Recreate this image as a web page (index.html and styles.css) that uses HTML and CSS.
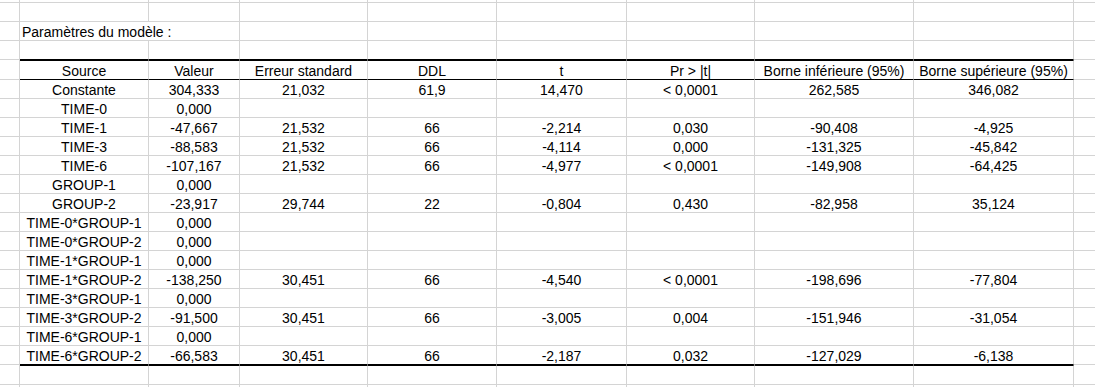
FILE: index.html
```html
<!DOCTYPE html>
<html lang="fr">
<head>
<meta charset="utf-8">
<title>Paramètres du modèle</title>
<link rel="stylesheet" href="styles.css">
</head>
<body>
<div class="sheet">
  <div class="row r-top"><div></div><div></div><div></div><div></div><div></div><div></div><div></div><div></div><div></div><div></div></div>
  <div class="row"><div></div><div></div><div></div><div></div><div></div><div></div><div></div><div></div><div></div><div></div></div>
  <div class="row"><div></div><div class="title">Paramètres du modèle :</div><div></div><div></div><div></div><div></div><div></div><div></div><div></div></div>
  <div class="row above"><div></div><div class="t"></div><div class="t"></div><div class="t"></div><div class="t"></div><div class="t"></div><div class="t"></div><div class="t"></div><div class="t"></div><div></div></div>
  <div class="row head"><div></div><div class="t">Source</div><div class="t">Valeur</div><div class="t">Erreur standard</div><div class="t">DDL</div><div class="t">t</div><div class="t">Pr &gt; |t|</div><div class="t">Borne inférieure (95%)</div><div class="t">Borne supérieure (95%)</div><div></div></div>
  <div class="row"><div></div><div class="t">Constante</div><div class="t">304,333</div><div class="t">21,032</div><div class="t">61,9</div><div class="t">14,470</div><div class="t">&lt; 0,0001</div><div class="t">262,585</div><div class="t">346,082</div><div></div></div>
  <div class="row"><div></div><div class="t">TIME-0</div><div class="t">0,000</div><div class="t"></div><div class="t"></div><div class="t"></div><div class="t"></div><div class="t"></div><div class="t"></div><div></div></div>
  <div class="row"><div></div><div class="t">TIME-1</div><div class="t">-47,667</div><div class="t">21,532</div><div class="t">66</div><div class="t">-2,214</div><div class="t">0,030</div><div class="t">-90,408</div><div class="t">-4,925</div><div></div></div>
  <div class="row"><div></div><div class="t">TIME-3</div><div class="t">-88,583</div><div class="t">21,532</div><div class="t">66</div><div class="t">-4,114</div><div class="t">0,000</div><div class="t">-131,325</div><div class="t">-45,842</div><div></div></div>
  <div class="row"><div></div><div class="t">TIME-6</div><div class="t">-107,167</div><div class="t">21,532</div><div class="t">66</div><div class="t">-4,977</div><div class="t">&lt; 0,0001</div><div class="t">-149,908</div><div class="t">-64,425</div><div></div></div>
  <div class="row"><div></div><div class="t">GROUP-1</div><div class="t">0,000</div><div class="t"></div><div class="t"></div><div class="t"></div><div class="t"></div><div class="t"></div><div class="t"></div><div></div></div>
  <div class="row"><div></div><div class="t">GROUP-2</div><div class="t">-23,917</div><div class="t">29,744</div><div class="t">22</div><div class="t">-0,804</div><div class="t">0,430</div><div class="t">-82,958</div><div class="t">35,124</div><div></div></div>
  <div class="row"><div></div><div class="t">TIME-0*GROUP-1</div><div class="t">0,000</div><div class="t"></div><div class="t"></div><div class="t"></div><div class="t"></div><div class="t"></div><div class="t"></div><div></div></div>
  <div class="row"><div></div><div class="t">TIME-0*GROUP-2</div><div class="t">0,000</div><div class="t"></div><div class="t"></div><div class="t"></div><div class="t"></div><div class="t"></div><div class="t"></div><div></div></div>
  <div class="row"><div></div><div class="t">TIME-1*GROUP-1</div><div class="t">0,000</div><div class="t"></div><div class="t"></div><div class="t"></div><div class="t"></div><div class="t"></div><div class="t"></div><div></div></div>
  <div class="row"><div></div><div class="t">TIME-1*GROUP-2</div><div class="t">-138,250</div><div class="t">30,451</div><div class="t">66</div><div class="t">-4,540</div><div class="t">&lt; 0,0001</div><div class="t">-198,696</div><div class="t">-77,804</div><div></div></div>
  <div class="row"><div></div><div class="t">TIME-3*GROUP-1</div><div class="t">0,000</div><div class="t"></div><div class="t"></div><div class="t"></div><div class="t"></div><div class="t"></div><div class="t"></div><div></div></div>
  <div class="row"><div></div><div class="t">TIME-3*GROUP-2</div><div class="t">-91,500</div><div class="t">30,451</div><div class="t">66</div><div class="t">-3,005</div><div class="t">0,004</div><div class="t">-151,946</div><div class="t">-31,054</div><div></div></div>
  <div class="row"><div></div><div class="t">TIME-6*GROUP-1</div><div class="t">0,000</div><div class="t"></div><div class="t"></div><div class="t"></div><div class="t"></div><div class="t"></div><div class="t"></div><div></div></div>
  <div class="row last"><div></div><div class="t">TIME-6*GROUP-2</div><div class="t">-66,583</div><div class="t">30,451</div><div class="t">66</div><div class="t">-2,187</div><div class="t">0,032</div><div class="t">-127,029</div><div class="t">-6,138</div><div></div></div>
  <div class="row below"><div></div><div class="t"></div><div class="t"></div><div class="t"></div><div class="t"></div><div class="t"></div><div class="t"></div><div class="t"></div><div class="t"></div><div></div></div>
  <div class="row"><div></div><div></div><div></div><div></div><div></div><div></div><div></div><div></div><div></div><div></div></div>
</div>
</body>
</html>
```
FILE: styles.css
```css
html, body {
  margin: 0;
  padding: 0;
  background: #ffffff;
}

body {
  font-family: "Liberation Sans", Arial, sans-serif;
  font-size: 14px;
  color: #000000;
  overflow: hidden;
}

.sheet {
  display: flex;
  flex-direction: column;
  width: 1095px;
  height: 387px;
  overflow: hidden;
}

.row {
  display: grid;
  grid-template-columns: 20px 129px 91px 128px 129px 130px 128px 159px 160px 1fr;
  height: 19px;
  flex: none;
}

.row > div {
  box-sizing: border-box;
  border-right: 1px solid #d4d4d4;
  border-bottom: 1px solid #d4d4d4;
  display: flex;
  align-items: flex-end;
  justify-content: center;
  line-height: 16px;
  white-space: nowrap;
  overflow: hidden;
}

.row > div:last-child {
  border-right: none;
}

.row.r-top {
  height: 3px;
}

.row .title {
  grid-column: span 2;
  justify-content: flex-start;
  padding-left: 2px;
  overflow: visible;
}

.row.above > .t {
  border-bottom-color: #000000;
}

.row.head {
  height: 20px;
}

.row.head > .t {
  border-top: 1px solid #000000;
  border-bottom-color: #000000;
}

.row.last > .t {
  border-bottom-color: #000000;
}

.row.below {
  height: 20px;
}

.row.below > .t {
  border-top: 1px solid #000000;
}
```
